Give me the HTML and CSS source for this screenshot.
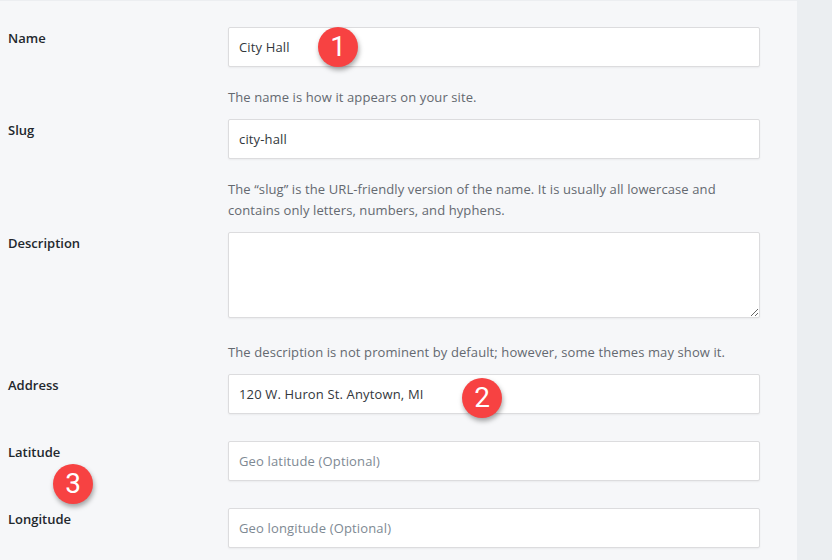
FILE: index.html
```html
<!DOCTYPE html>
<html lang="en">

<head>
  <meta charset="UTF-8">
  <meta name="viewport" content="width=device-width, initial-scale=1.0">
  <title>Edit Location</title>
  <link rel="stylesheet" href="styles.css">
</head>

<body>
  <div class="page">
    <form class="term-form">
      <div class="row has-help">
        <label class="label" for="tag-name">Name</label>
        <div class="field">
          <div class="input-wrap">
            <input id="tag-name" class="text-input" type="text" value="City Hall">
            <span class="badge badge-1">1</span>
          </div>
          <p class="help">The name is how it appears on your site.</p>
        </div>
      </div>

      <div class="row has-help">
        <label class="label" for="tag-slug">Slug</label>
        <div class="field">
          <input id="tag-slug" class="text-input" type="text" value="city-hall">
          <p class="help">The “slug” is the URL-friendly version of the name. It is usually all lowercase and contains only letters, numbers, and hyphens.</p>
        </div>
      </div>

      <div class="row has-help">
        <label class="label" for="tag-description">Description</label>
        <div class="field">
          <textarea id="tag-description" class="text-area"></textarea>
          <p class="help help-area">The description is not prominent by default; however, some themes may show it.</p>
        </div>
      </div>

      <div class="row">
        <label class="label" for="tag-address">Address</label>
        <div class="field">
          <div class="input-wrap">
            <input id="tag-address" class="text-input" type="text" value="120 W. Huron St. Anytown, MI">
            <span class="badge badge-2">2</span>
          </div>
        </div>
      </div>

      <div class="row">
        <div class="label-wrap">
          <label class="label" for="tag-lat">Latitude</label>
          <span class="badge badge-3">3</span>
        </div>
        <div class="field">
          <input id="tag-lat" class="text-input" type="text" placeholder="Geo latitude (Optional)">
        </div>
      </div>

      <div class="row">
        <label class="label" for="tag-lng">Longitude</label>
        <div class="field">
          <input id="tag-lng" class="text-input" type="text" placeholder="Geo longitude (Optional)">
        </div>
      </div>
    </form>
    <div class="side"></div>
  </div>
</body>

</html>
```

FILE: styles.css
```css
* {
  margin: 0;
  padding: 0;
  box-sizing: border-box;
}

body {
  background-color: #ebeef1;
  font-family: "Open Sans", "Noto Sans", sans-serif;
  font-size: 13px;
  color: #32373c;
}

.page {
  display: flex;
  height: 560px;
}

.term-form {
  width: 797px;
  background-color: #f6f7f9;
  border-top: 1px solid #eceef1;
  padding: 26px 0 0 8px;
}

.side {
  flex: 1;
}

.row {
  display: grid;
  grid-template-columns: 220px 532px;
  padding-bottom: 27px;
}

.row.has-help {
  padding-bottom: 11px;
}

.label-wrap {
  position: relative;
}

.label {
  display: block;
  padding-top: 2px;
  line-height: 18px;
  font-weight: 600;
  color: #23282d;
}

.input-wrap {
  position: relative;
}

.text-input,
.text-area {
  display: block;
  width: 100%;
  border: 1px solid #dcdcde;
  border-radius: 2px;
  background-color: #fff;
  box-shadow: 0 1px 2px rgba(0, 0, 0, .05);
  font-family: inherit;
  font-size: 13px;
  letter-spacing: .15px;
  color: #32373c;
  outline: none;
}

.text-input {
  height: 40px;
  padding: 0 10px;
}

.text-input::placeholder {
  color: #7e8993;
}

.text-area {
  height: 86px;
  resize: vertical;
}

.help {
  margin-top: 20px;
  line-height: 21px;
  letter-spacing: .1px;
  color: #646970;
}

.help-area {
  margin-top: 24px;
}

.badge {
  position: absolute;
  width: 40px;
  height: 40px;
  line-height: 40px;
  border-radius: 50%;
  background-color: #f74242;
  box-shadow: 1px 3px 5px rgba(0, 0, 0, .35);
  font-family: Roboto, "Liberation Sans", sans-serif;
  font-size: 28px;
  color: #fff;
  text-align: center;
}

.badge-1 {
  left: 90px;
  top: 0;
}

.badge-2 {
  left: 234px;
  top: 4px;
}

.badge-3 {
  left: 45px;
  top: 23px;
}
```
